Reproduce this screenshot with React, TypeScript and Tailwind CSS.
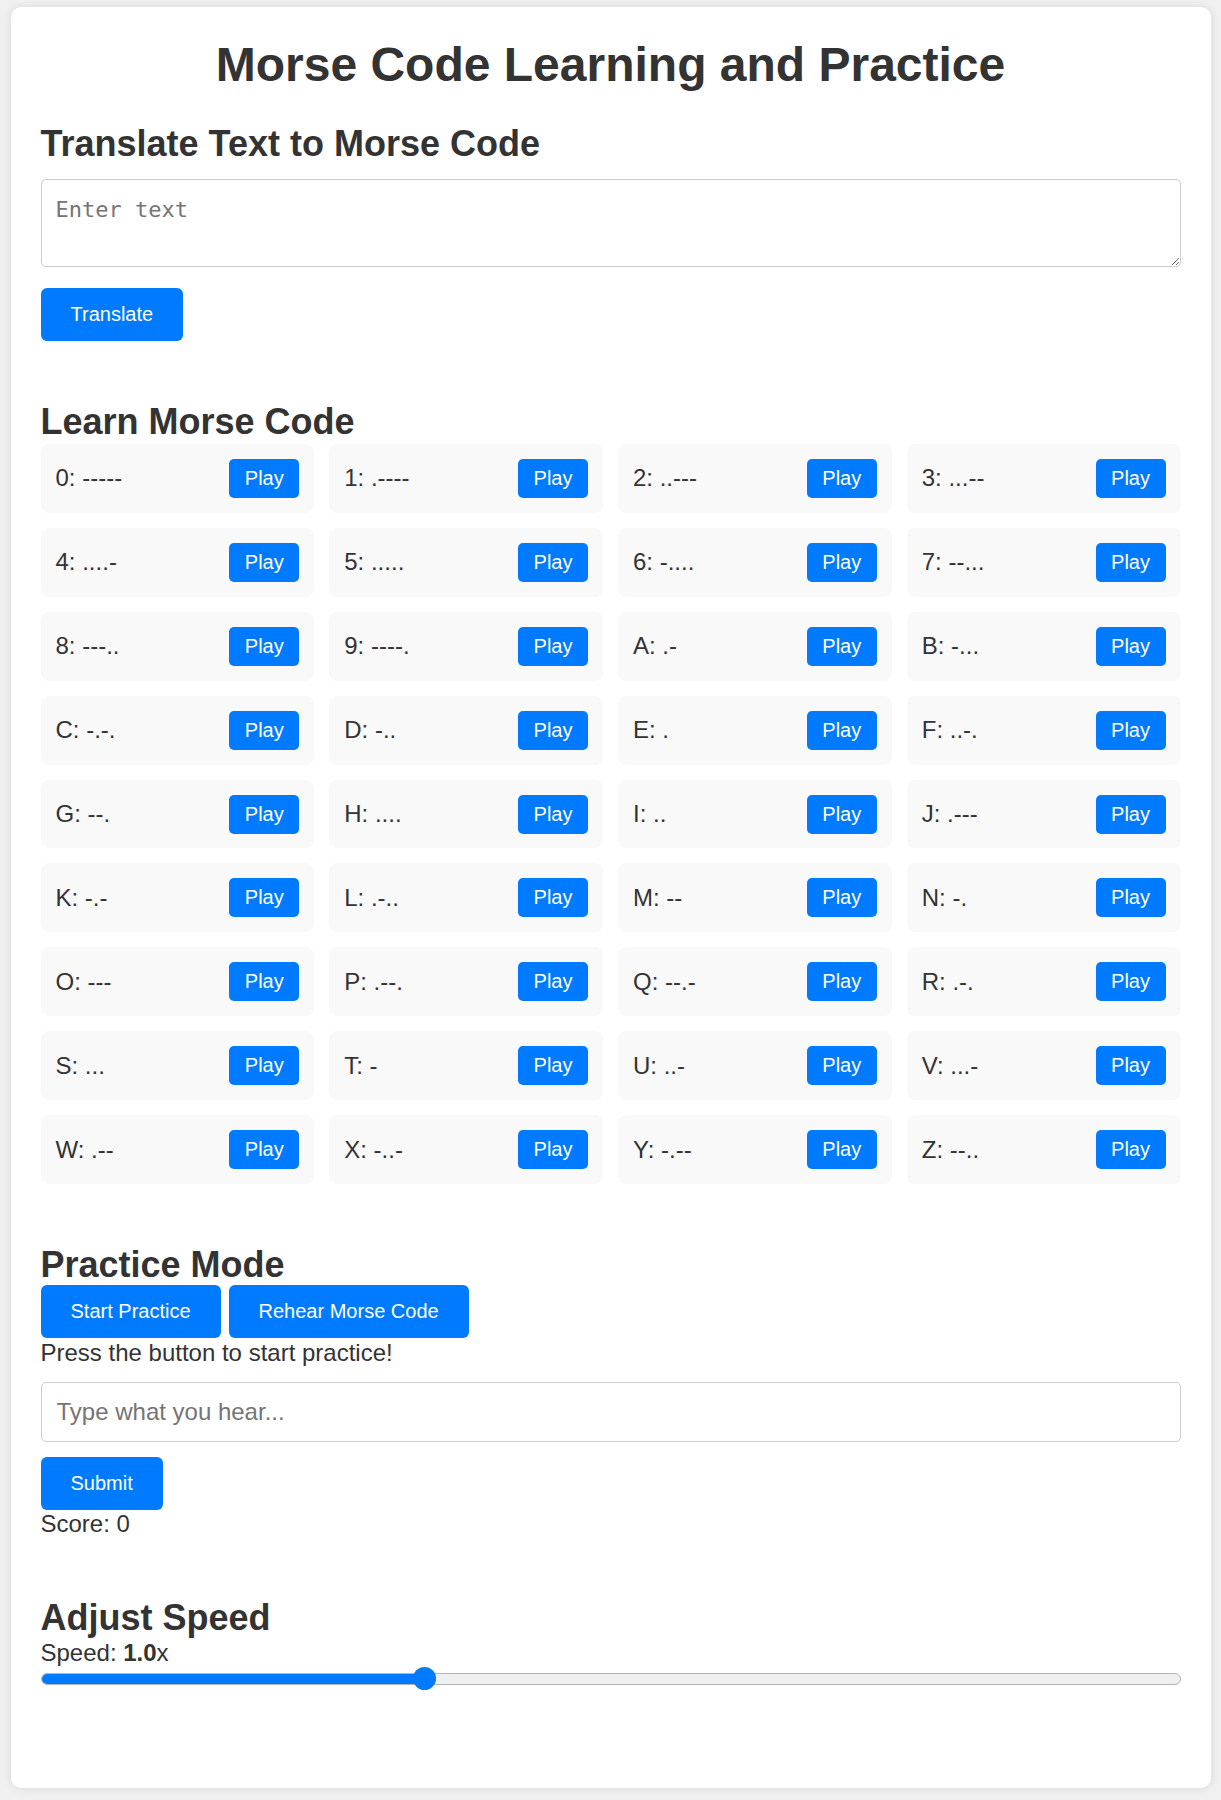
import { useState } from "react";

const morse: [string, string][] = [
  ["0", "-----"], ["1", ".----"], ["2", "..---"], ["3", "...--"],
  ["4", "....-"], ["5", "....."], ["6", "-...."], ["7", "--..."],
  ["8", "---.."], ["9", "----."], ["A", ".-"], ["B", "-..."],
  ["C", "-.-."], ["D", "-.."], ["E", "."], ["F", "..-."],
  ["G", "--."], ["H", "...."], ["I", ".."], ["J", ".---"],
  ["K", "-.-"], ["L", ".-.."], ["M", "--"], ["N", "-."],
  ["O", "---"], ["P", ".--."], ["Q", "--.-"], ["R", ".-."],
  ["S", "..."], ["T", "-"], ["U", "..-"], ["V", "...-"],
  ["W", ".--"], ["X", "-..-"], ["Y", "-.--"], ["Z", "--.."],
];

const btn = "h-[53px] rounded-[6px] bg-[#007bff] px-[30px] text-[20px] leading-[23px] text-white";

export default function App() {
  const [text, setText] = useState("");
  const [answer, setAnswer] = useState("");
  const speed = 1.0;
  const pct = (speed - 0.5) / 1.5;

  return (
    <div className="min-h-screen bg-[#f0f0f0] pt-[7px] pb-[12px] font-['Liberation_Sans',Arial,sans-serif] text-[#333]">
      <div className="mx-auto w-[1200px] rounded-[10px] bg-white px-[30px] pt-[30px] pb-[97px] shadow-[0_0_10px_rgba(0,0,0,0.1)]">
        <h1 className="text-center text-[48px] font-bold leading-[55px]">Morse Code Learning and Practice</h1>

        <h2 className="mt-[31px] text-[36px] font-bold leading-[41px]">Translate Text to Morse Code</h2>
        <textarea
          value={text}
          onChange={(e) => setText(e.target.value)}
          placeholder="Enter text"
          className="mt-[15px] block h-[88px] w-full rounded-[5px] border border-[#ccc] px-[14px] pt-[17px] pb-[10px] font-['DejaVu_Sans_Mono',monospace] text-[22px] leading-[25.6px] placeholder:text-[#757575]"
        />
        <button type="button" className={`mt-[21px] ${btn}`}>
          Translate
        </button>

        <h2 className="mt-[60px] text-[36px] font-bold leading-[41px]">Learn Morse Code</h2>
        <div className="mt-[2px] grid grid-cols-4 gap-[15px]">
          {morse.map(([ch, code]) => (
            <div key={ch} className="flex h-[68.9px] items-center justify-between rounded-[8px] bg-[#f9f9f9] px-[15px]">
              <span className="text-[24px] leading-[28px]">
                {ch}: {code}
              </span>
              <button type="button" className="h-[39px] w-[70px] rounded-[5px] bg-[#007bff] text-[20px] leading-[23px] text-white">
                Play
              </button>
            </div>
          ))}
        </div>

        <h2 className="mt-[60px] text-[36px] font-bold leading-[41px]">Practice Mode</h2>
        <div className="flex gap-[8px]">
          <button type="button" className={btn}>
            Start Practice
          </button>
          <button type="button" className={btn}>
            Rehear Morse Code
          </button>
        </div>
        <p className="mt-[1px] text-[24px] leading-[27.6px]">Press the button to start practice!</p>
        <input
          value={answer}
          onChange={(e) => setAnswer(e.target.value)}
          placeholder="Type what you hear..."
          className="mt-[15px] block h-[60px] w-full rounded-[5px] border border-[#ccc] px-[15px] text-[24px] placeholder:text-[#757575]"
        />
        <button type="button" className={`mt-[15px] ${btn}`}>
          Submit
        </button>
        <p className="text-[24px] leading-[27.6px]">Score: 0</p>

        <h2 className="mt-[60px] text-[36px] font-bold leading-[41px]">Adjust Speed</h2>
        <p className="mt-[1px] text-[24px] leading-[27.6px]">
          Speed: <b>1.0</b>x
        </p>
        <div className="relative flex h-[24px] items-center">
          <div className="flex h-[12px] w-full overflow-hidden rounded-full border border-[#b5b5b5] bg-[#efefef]">
            <div className="h-full bg-[#007bff]" style={{ width: `calc(11px + ${pct} * (100% - 22px))` }} />
          </div>
          <div
            className="absolute top-[0.5px] h-[23px] w-[23px] rounded-full bg-[#007bff]"
            style={{ left: `calc(${pct} * (100% - 23px))` }}
          />
        </div>
      </div>
    </div>
  );
}
